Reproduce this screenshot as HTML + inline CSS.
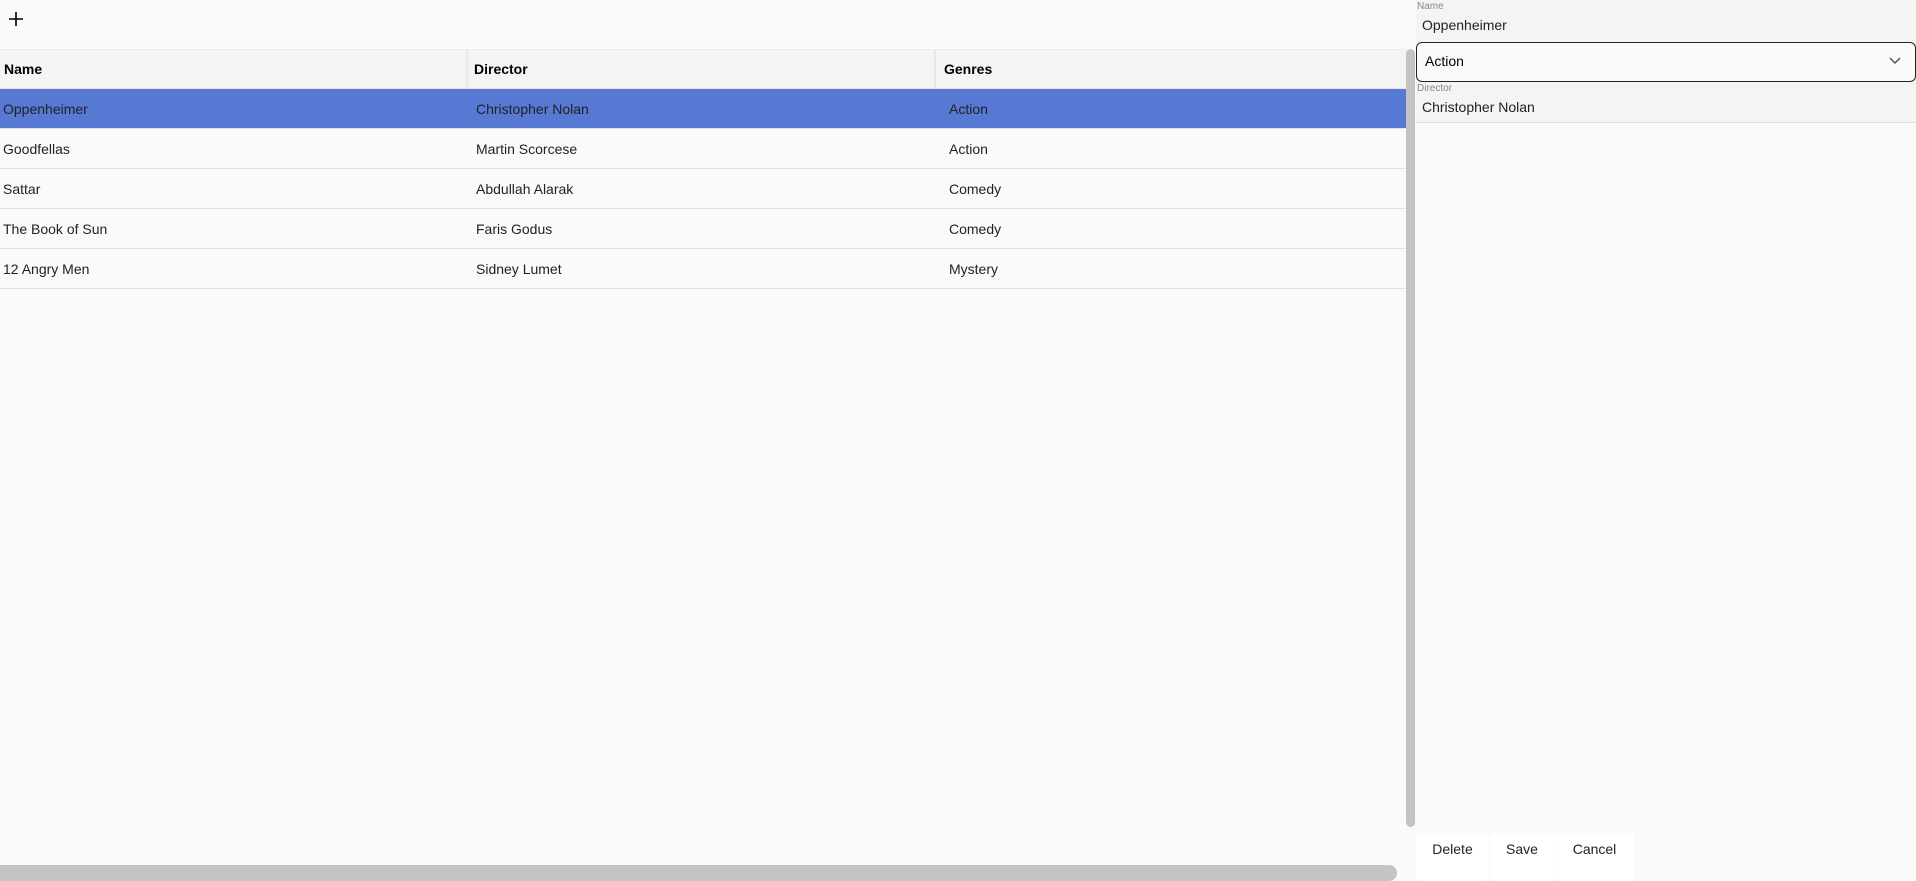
<!DOCTYPE html>
<html><head><style>
*{box-sizing:border-box;margin:0;padding:0}
body{width:1916px;height:881px;background:#fafafa;font-family:"Liberation Sans",sans-serif;position:relative;overflow:hidden;color:#222}
.abs{position:absolute}
.hdr{top:49px;left:0;width:1406px;height:40px;background:#f4f4f4;border-top:1px solid #ececec;border-bottom:1px solid #e4e4e4}
.row{left:0;width:1406px;height:40px;border-bottom:1px solid #e2e2e2;font-size:14px}
.c{position:absolute;top:0;line-height:39px;white-space:nowrap}
.row .c{line-height:41px}
.h{font-weight:bold;font-size:14px;color:#000}
.sel{background:#5778d3}
.btn{top:833px;height:48px;background:#fff;border-radius:3px;font-size:14px;line-height:32px;text-align:center;color:#222}
</style></head><body>
<svg class="abs" style="left:8px;top:11px" width="16" height="16"><path d="M8 1V15M1 8H15" stroke="#000" stroke-width="1.6"/></svg>
<div class="abs hdr">
<div class="c h" style="left:4px">Name</div>
<div class="abs" style="left:466px;top:0;width:2px;height:38px;background:#e8e8e8"></div>
<div class="c h" style="left:474px">Director</div>
<div class="abs" style="left:934px;top:0;width:2px;height:38px;background:#e8e8e8"></div>
<div class="c h" style="left:944px">Genres</div>
</div>
<div class="abs row sel" style="top:89px"><div class="c" style="left:3px">Oppenheimer</div><div class="c" style="left:476px">Christopher Nolan</div><div class="c" style="left:949px">Action</div></div>
<div class="abs row" style="top:129px"><div class="c" style="left:3px">Goodfellas</div><div class="c" style="left:476px">Martin Scorcese</div><div class="c" style="left:949px">Action</div></div>
<div class="abs row" style="top:169px"><div class="c" style="left:3px">Sattar</div><div class="c" style="left:476px">Abdullah Alarak</div><div class="c" style="left:949px">Comedy</div></div>
<div class="abs row" style="top:209px"><div class="c" style="left:3px">The Book of Sun</div><div class="c" style="left:476px">Faris Godus</div><div class="c" style="left:949px">Comedy</div></div>
<div class="abs row" style="top:249px"><div class="c" style="left:3px">12 Angry Men</div><div class="c" style="left:476px">Sidney Lumet</div><div class="c" style="left:949px">Mystery</div></div>
<div class="abs" style="left:1406px;top:49px;width:9px;height:778px;background:#c4c4c4;border-radius:5px"></div>
<div class="abs" style="left:0;top:865px;width:1397px;height:16px;background:#c4c4c4;border-radius:0 8px 8px 0"></div>
<div class="abs" style="left:1416px;top:0;width:500px;height:123px;background:#f4f4f4;border-bottom:1px solid #ddd"></div>
<div class="abs" style="left:1417px;top:1px;font-size:10px;color:#888">Name</div>
<div class="abs" style="left:1422px;top:17px;font-size:14px;color:#222">Oppenheimer</div>
<div class="abs" style="left:1416px;top:42px;width:500px;height:40px;border:1.5px solid #222;border-radius:6px;background:#fafafa"></div>
<div class="abs" style="left:1425px;top:53px;font-size:14px;color:#000">Action</div>
<svg class="abs" style="left:1888px;top:56px" width="14" height="10"><path d="M2 2L7 7L12 2" stroke="#555" stroke-width="1.5" fill="none"/></svg>
<div class="abs" style="left:1417px;top:83px;font-size:10px;color:#888">Director</div>
<div class="abs" style="left:1422px;top:99px;font-size:14px;color:#222">Christopher Nolan</div>
<div class="abs btn" style="left:1416px;width:73px">Delete</div>
<div class="abs btn" style="left:1490px;width:64px">Save</div>
<div class="abs btn" style="left:1555px;width:79px">Cancel</div>
</body></html>
